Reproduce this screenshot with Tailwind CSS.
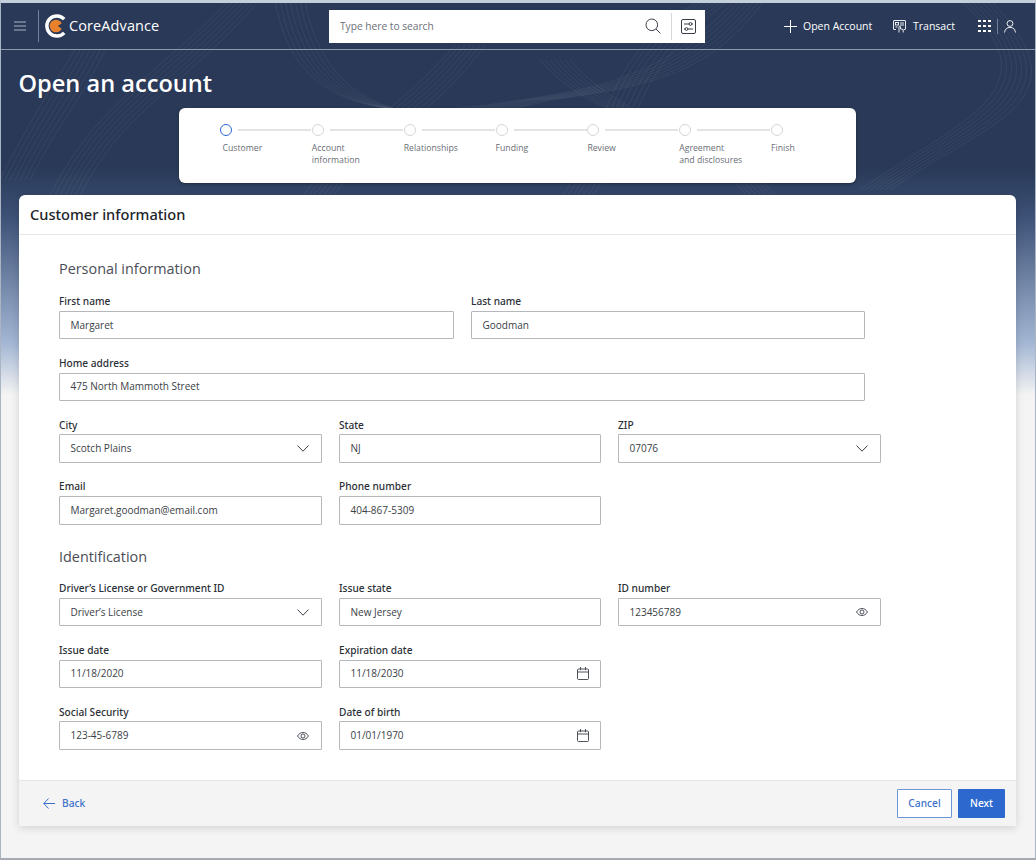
<!DOCTYPE html>
<html lang="en">
<head>
    <meta charset="UTF-8">
    <meta name="viewport" content="width=device-width, initial-scale=1.0">
    <title>Open an account</title>
    <script src="https://cdn.jsdelivr.net/npm/@tailwindcss/browser@4"></script>
</head>
<body class="bg-[#f4f4f4]">
<div class="relative w-[1036px] h-[860px] overflow-hidden border-t-[3px] border-t-[#c4cfdb] border-x border-x-[#a9b5c3] border-b-2 border-b-[#a6abb3] bg-[linear-gradient(180deg,#293957_0px,#293957_165px,#3e5278_215px,#a3b6d3_340px,#f4f4f4_392px)] font-['Open_Sans',sans-serif] text-[#2b2f36]">

    <!-- background swirl lines -->
    <svg id="swirls" class="absolute left-[-1px] top-[-3px] w-[1036px] h-[240px]" viewBox="0 0 1036 240" fill="none"></svg>

    <!-- top bar -->
    <header class="relative flex items-center h-[47px] border-b border-b-[#8d98aa] text-white">
        <svg class="ml-[13px] w-[12px] h-[10px] text-[#aab4c4]" viewBox="0 0 12 10" stroke="currentColor" stroke-width="1.2"><path d="M0 1h12M0 5h12M0 9h12"/></svg>
        <div class="ml-[12px] w-px h-[32px] bg-[#74819a]"></div>
        <svg class="ml-[5px] w-[24px] h-[24px]" viewBox="0 0 24 24" fill="none">
            <path d="M20.2 5.2A10 10 0 1 0 20.2 18.8" stroke="#fff" stroke-width="3.4"/>
            <circle cx="12" cy="12" r="6.3" fill="#e9802c"/>
            <path d="M19 8.6L13.8 12L19 15.4Z" fill="#293957"/>
        </svg>
        <span class="ml-[1px] w-[90px] text-[14.5px] leading-none tracking-[0.1px]">CoreAdvance</span>
        <div class="ml-[170px] flex items-center w-[376px] h-[33px] bg-white text-[#2b2f36]">
            <span class="ml-[11px] mt-[1px] text-[10.2px] text-[#6b7078]">Type here to search</span>
            <svg class="ml-auto mr-[1px] w-[16px] h-[16px]" viewBox="0 0 16 16" fill="none" stroke="#3a3f47" stroke-width="1"><circle cx="6.8" cy="6.8" r="5.8"/><path d="M11 11l4.4 4.4"/></svg>
            <div class="ml-[9px] w-px h-[27px] bg-[#d6d8dc]"></div>
            <svg class="ml-[9px] mr-[9px] w-[15px] h-[15px]" viewBox="0 0 15 15" fill="none" stroke="#3a3f47" stroke-width="1"><rect x="0.5" y="0.5" width="14" height="14" rx="1.5"/><path d="M3 5h9M3 10h9"/><circle cx="9.5" cy="5" r="1.4" fill="#fff"/><circle cx="5.5" cy="10" r="1.4" fill="#fff"/></svg>
        </div>
        <svg class="ml-[79px] w-[13px] h-[13px]" viewBox="0 0 13 13" stroke="#fff" stroke-width="1"><path d="M6.5 0v13M0 6.5h13"/></svg>
        <span class="ml-[6px] w-[69px] mt-[1px] text-[10.5px] whitespace-nowrap">Open Account</span>
        <svg class="ml-[21px] w-[13px] h-[13px]" viewBox="0 0 13 13" fill="none" stroke="#fff" stroke-width="0.9"><path d="M3 9.5H1a.5.5 0 0 1-.5-.5V1A.5.5 0 0 1 1 .5h11a.5.5 0 0 1 .5.5v8a.5.5 0 0 1-.5.5h-1"/><rect x="2.5" y="2.5" width="3" height="2.5"/><path d="M7 3h4M7 5h4M2.5 7h2"/><path d="M6 12.5V7a.8.8 0 0 1 1.6 0v2l2.6.5v3"/></svg>
        <span class="ml-[7px] w-[42px] mt-[1px] text-[10.5px]">Transact</span>
        <div class="ml-[23px] grid grid-cols-3 gap-[2.5px] w-[13px]">
            <i class="w-[2.5px] h-[2.5px] bg-white"></i><i class="w-[2.5px] h-[2.5px] bg-white"></i><i class="w-[2.5px] h-[2.5px] bg-white"></i>
            <i class="w-[2.5px] h-[2.5px] bg-white"></i><i class="w-[2.5px] h-[2.5px] bg-white"></i><i class="w-[2.5px] h-[2.5px] bg-white"></i>
            <i class="w-[2.5px] h-[2.5px] bg-white"></i><i class="w-[2.5px] h-[2.5px] bg-white"></i><i class="w-[2.5px] h-[2.5px] bg-white"></i>
        </div>
        <div class="ml-[6px] w-px h-[15px] bg-[#74819a]"></div>
        <svg class="ml-[6px] w-[12px] h-[13px]" viewBox="0 0 12 13" fill="none" stroke="#fff" stroke-width="0.9"><circle cx="6" cy="3.5" r="2.9"/><path d="M0.5 12.5C1 9 3 7.4 6 7.4s5 1.6 5.5 5.1"/></svg>
    </header>

    <h1 class="relative ml-[17.5px] mt-[15px] h-[36px] text-[23.6px] leading-[36px] font-semibold text-white">Open an account</h1>

    <!-- stepper -->
    <div class="relative ml-[178px] mt-[7px] w-[677px] h-[75px] rounded-md bg-white shadow-[0_1px_3px_rgba(0,0,0,0.35)] pl-[41px] pt-[16px] grid grid-cols-[repeat(7,91.85px)] content-start text-[8.7px] leading-[12px] text-[#6a6e75]">
        <div>
            <div class="flex items-center h-[12px]"><span class="w-[12px] h-[12px] rounded-full border border-[#2d68cf]"></span><span class="ml-[6px] w-[73px] h-[2px] bg-[#e3e4e6]"></span></div>
            <p class="ml-[2.5px] mt-[6px]">Customer</p>
        </div>
        <div>
            <div class="flex items-center h-[12px]"><span class="w-[12px] h-[12px] rounded-full border border-[#d4d6d9]"></span><span class="ml-[6px] w-[73px] h-[2px] bg-[#e3e4e6]"></span></div>
            <p class="mt-[6px]">Account<br>information</p>
        </div>
        <div>
            <div class="flex items-center h-[12px]"><span class="w-[12px] h-[12px] rounded-full border border-[#d4d6d9]"></span><span class="ml-[6px] w-[73px] h-[2px] bg-[#e3e4e6]"></span></div>
            <p class="mt-[6px]">Relationships</p>
        </div>
        <div>
            <div class="flex items-center h-[12px]"><span class="w-[12px] h-[12px] rounded-full border border-[#d4d6d9]"></span><span class="ml-[6px] w-[73px] h-[2px] bg-[#e3e4e6]"></span></div>
            <p class="mt-[6px]">Funding</p>
        </div>
        <div>
            <div class="flex items-center h-[12px]"><span class="w-[12px] h-[12px] rounded-full border border-[#d4d6d9]"></span><span class="ml-[6px] w-[73px] h-[2px] bg-[#e3e4e6]"></span></div>
            <p class="mt-[6px]">Review</p>
        </div>
        <div>
            <div class="flex items-center h-[12px]"><span class="w-[12px] h-[12px] rounded-full border border-[#d4d6d9]"></span><span class="ml-[6px] w-[73px] h-[2px] bg-[#e3e4e6]"></span></div>
            <p class="mt-[6px] whitespace-nowrap">Agreement<br>and disclosures</p>
        </div>
        <div>
            <div class="flex items-center h-[12px]"><span class="w-[12px] h-[12px] rounded-full border border-[#d4d6d9]"></span></div>
            <p class="mt-[6px]">Finish</p>
        </div>
    </div>

    <!-- form card -->
    <main class="relative ml-[18px] mt-[12px] w-[997px] h-[631px] flex flex-col rounded-t-md bg-white shadow-[0_2px_8px_rgba(0,0,0,0.14)]">
        <div class="h-[40px] shrink-0 border-b border-b-[#e8e8e9] pl-[11px] font-['Noto_Sans',sans-serif] text-[14.6px] leading-[39px] font-medium text-[#20242a]">Customer information</div>

        <div class="grow pl-[40px] pt-[23px] text-[10px] text-[#3a3e45]">
            <h2 class="h-[22px] text-[14.4px] leading-[22px] text-[#4a4e55]">Personal information</h2>
            <div class="mt-[13px] flex flex-col gap-[15.5px]">
                <div class="flex gap-[17px]">
                    <div class="w-[395px]">
                        <label class="block h-[17.75px] leading-[16px] font-['Noto_Sans',sans-serif] text-[10.15px] font-medium text-[#2b2f36]">First name</label>
                        <div class="flex items-center h-[28.5px] pl-[10.5px] pr-[11px] rounded-[1px] border border-[#b5b7ba]">Margaret</div>
                    </div>
                    <div class="w-[394px]">
                        <label class="block h-[17.75px] leading-[16px] font-['Noto_Sans',sans-serif] text-[10.15px] font-medium text-[#2b2f36]">Last name</label>
                        <div class="flex items-center h-[28.5px] pl-[10.5px] pr-[11px] rounded-[1px] border border-[#b5b7ba]">Goodman</div>
                    </div>
                </div>
                <div class="w-[806px]">
                    <label class="block h-[17.75px] leading-[16px] font-['Noto_Sans',sans-serif] text-[10.15px] font-medium text-[#2b2f36]">Home address</label>
                    <div class="flex items-center h-[28.5px] pl-[10.5px] pr-[11px] rounded-[1px] border border-[#b5b7ba]">475 North Mammoth Street</div>
                </div>
                <div class="grid grid-cols-[263px_262px_263px] gap-x-[17px]">
                    <div>
                        <label class="block h-[17.75px] leading-[16px] font-['Noto_Sans',sans-serif] text-[10.15px] font-medium text-[#2b2f36]">City</label>
                        <div class="flex items-center justify-between h-[28.5px] pl-[10.5px] pr-[12px] rounded-[1px] border border-[#b5b7ba]">Scotch Plains
                            <svg class="w-[12px] h-[7px]" viewBox="0 0 12 7" fill="none" stroke="#3a3f47"><path d="M.5.5L6 6.2 11.5.5"/></svg>
                        </div>
                    </div>
                    <div>
                        <label class="block h-[17.75px] leading-[16px] font-['Noto_Sans',sans-serif] text-[10.15px] font-medium text-[#2b2f36]">State</label>
                        <div class="flex items-center h-[28.5px] pl-[10.5px] pr-[11px] rounded-[1px] border border-[#b5b7ba]">NJ</div>
                    </div>
                    <div>
                        <label class="block h-[17.75px] leading-[16px] font-['Noto_Sans',sans-serif] text-[10.15px] font-medium text-[#2b2f36]">ZIP</label>
                        <div class="flex items-center justify-between h-[28.5px] pl-[10.5px] pr-[12px] rounded-[1px] border border-[#b5b7ba]">07076
                            <svg class="w-[12px] h-[7px]" viewBox="0 0 12 7" fill="none" stroke="#3a3f47"><path d="M.5.5L6 6.2 11.5.5"/></svg>
                        </div>
                    </div>
                </div>
                <div class="grid grid-cols-[263px_262px_263px] gap-x-[17px]">
                    <div>
                        <label class="block h-[17.75px] leading-[16px] font-['Noto_Sans',sans-serif] text-[10.15px] font-medium text-[#2b2f36]">Email</label>
                        <div class="flex items-center h-[28.5px] pl-[10.5px] pr-[11px] rounded-[1px] border border-[#b5b7ba]">Margaret.goodman@email.com</div>
                    </div>
                    <div>
                        <label class="block h-[17.75px] leading-[16px] font-['Noto_Sans',sans-serif] text-[10.15px] font-medium text-[#2b2f36]">Phone number</label>
                        <div class="flex items-center h-[28.5px] pl-[10.5px] pr-[11px] rounded-[1px] border border-[#b5b7ba]">404-867-5309</div>
                    </div>
                </div>
            </div>

            <h2 class="mt-[21.5px] h-[22px] text-[14.4px] leading-[22px] text-[#4a4e55]">Identification</h2>
            <div class="mt-[12px] grid grid-cols-[263px_262px_263px] gap-x-[17px] gap-y-[15.5px]">
                <div>
                    <label class="block h-[17.75px] leading-[16px] font-['Noto_Sans',sans-serif] text-[10.15px] font-medium text-[#2b2f36]">Driver’s License or Government ID</label>
                    <div class="flex items-center justify-between h-[28.5px] pl-[10.5px] pr-[12px] rounded-[1px] border border-[#b5b7ba]">Driver’s License
                        <svg class="w-[12px] h-[7px]" viewBox="0 0 12 7" fill="none" stroke="#3a3f47"><path d="M.5.5L6 6.2 11.5.5"/></svg>
                    </div>
                </div>
                <div>
                    <label class="block h-[17.75px] leading-[16px] font-['Noto_Sans',sans-serif] text-[10.15px] font-medium text-[#2b2f36]">Issue state</label>
                    <div class="flex items-center h-[28.5px] pl-[10.5px] pr-[11px] rounded-[1px] border border-[#b5b7ba]">New Jersey</div>
                </div>
                <div>
                    <label class="block h-[17.75px] leading-[16px] font-['Noto_Sans',sans-serif] text-[10.15px] font-medium text-[#2b2f36]">ID number</label>
                    <div class="flex items-center justify-between h-[28.5px] pl-[10.5px] pr-[12px] rounded-[1px] border border-[#b5b7ba]">123456789
                        <svg class="w-[12px] h-[8px]" viewBox="0 0 12 8" fill="none" stroke="#3a3f47" stroke-width="0.9"><path d="M.5 4C2 1.6 3.8.5 6 .5s4 1.1 5.5 3.5C10 6.4 8.2 7.5 6 7.5S2 6.4.5 4z"/><circle cx="6" cy="4" r="2"/></svg>
                    </div>
                </div>
                <div>
                    <label class="block h-[17.75px] leading-[16px] font-['Noto_Sans',sans-serif] text-[10.15px] font-medium text-[#2b2f36]">Issue date</label>
                    <div class="flex items-center h-[28.5px] pl-[10.5px] pr-[11px] rounded-[1px] border border-[#b5b7ba]">11/18/2020</div>
                </div>
                <div>
                    <label class="block h-[17.75px] leading-[16px] font-['Noto_Sans',sans-serif] text-[10.15px] font-medium text-[#2b2f36]">Expiration date</label>
                    <div class="flex items-center justify-between h-[28.5px] pl-[10.5px] pr-[11px] rounded-[1px] border border-[#b5b7ba]">11/18/2030
                        <svg class="w-[12px] h-[13px]" viewBox="0 0 12 13" fill="none" stroke="#3a3f47" stroke-width="0.9"><rect x=".5" y="2" width="11" height="10.5" rx="1"/><path d="M.5 5h11M3.5 0v3.2M8.5 0v3.2"/></svg>
                    </div>
                </div>
                <div></div>
                <div>
                    <label class="block h-[17.75px] leading-[16px] font-['Noto_Sans',sans-serif] text-[10.15px] font-medium text-[#2b2f36]">Social Security</label>
                    <div class="flex items-center justify-between h-[28.5px] pl-[10.5px] pr-[12px] rounded-[1px] border border-[#b5b7ba]">123-45-6789
                        <svg class="w-[12px] h-[8px]" viewBox="0 0 12 8" fill="none" stroke="#3a3f47" stroke-width="0.9"><path d="M.5 4C2 1.6 3.8.5 6 .5s4 1.1 5.5 3.5C10 6.4 8.2 7.5 6 7.5S2 6.4.5 4z"/><circle cx="6" cy="4" r="2"/></svg>
                    </div>
                </div>
                <div>
                    <label class="block h-[17.75px] leading-[16px] font-['Noto_Sans',sans-serif] text-[10.15px] font-medium text-[#2b2f36]">Date of birth</label>
                    <div class="flex items-center justify-between h-[28.5px] pl-[10.5px] pr-[11px] rounded-[1px] border border-[#b5b7ba]">01/01/1970
                        <svg class="w-[12px] h-[13px]" viewBox="0 0 12 13" fill="none" stroke="#3a3f47" stroke-width="0.9"><rect x=".5" y="2" width="11" height="10.5" rx="1"/><path d="M.5 5h11M3.5 0v3.2M8.5 0v3.2"/></svg>
                    </div>
                </div>
            </div>
        </div>

        <div class="flex items-center h-[46px] shrink-0 border-t border-t-[#e6e6e7] bg-[#f4f4f4] pl-[24px] pr-[11px] font-['Noto_Sans',sans-serif]">
            <svg class="w-[12px] h-[11px]" viewBox="0 0 12 11" fill="none" stroke="#3b70ca"><path d="M5.5.5L.8 5.5l4.7 5M.8 5.5H12"/></svg>
            <span class="ml-[7px] text-[10.2px] font-medium text-[#3b70ca]">Back</span>
            <button class="ml-auto w-[55px] h-[29px] rounded-[1px] border border-[#6b96d8] bg-white text-[10.2px] font-medium text-[#3b70ca]">Cancel</button>
            <button class="ml-[6px] w-[47px] h-[29px] rounded-[1px] bg-[#2d68cf] text-[10.2px] font-medium text-white">Next</button>
        </div>
    </main>
</div>

<script>
    // parallel strands of the banner pattern
    const curves = [
        [[48,200],[90,110],[150,80],[230,0]],
        [[275,0],[295,120],[400,120],[520,100]],
        [[520,100],[630,85],[680,60],[735,0]],
        [[300,200],[360,120],[400,110],[455,45]],
        [[560,200],[620,110],[600,60],[700,0]],
        [[860,190],[960,120],[1060,90],[960,0]],
        [[540,60],[600,130],[680,110],[750,200]],
        [[0,180],[30,120],[50,90],[75,50]]
    ];
    const svg = document.getElementById('swirls');
    curves.forEach(c => {
        for (let i = 0; i < 7; i++) {
            const off = i * 5;
            const d = 'M' + (c[0][0] + off) + ' ' + c[0][1] + ' C' + (c[1][0] + off) + ' ' + c[1][1] + ' ' + (c[2][0] + off) + ' ' + (c[2][1] + off * 0.4) + ' ' + (c[3][0] + off) + ' ' + c[3][1];
            const p = document.createElementNS('http://www.w3.org/2000/svg', 'path');
            p.setAttribute('d', d);
            p.setAttribute('stroke', 'rgba(255,255,255,0.08)');
            p.setAttribute('stroke-width', '0.8');
            svg.appendChild(p);
        }
    });
</script>
</body>
</html>
